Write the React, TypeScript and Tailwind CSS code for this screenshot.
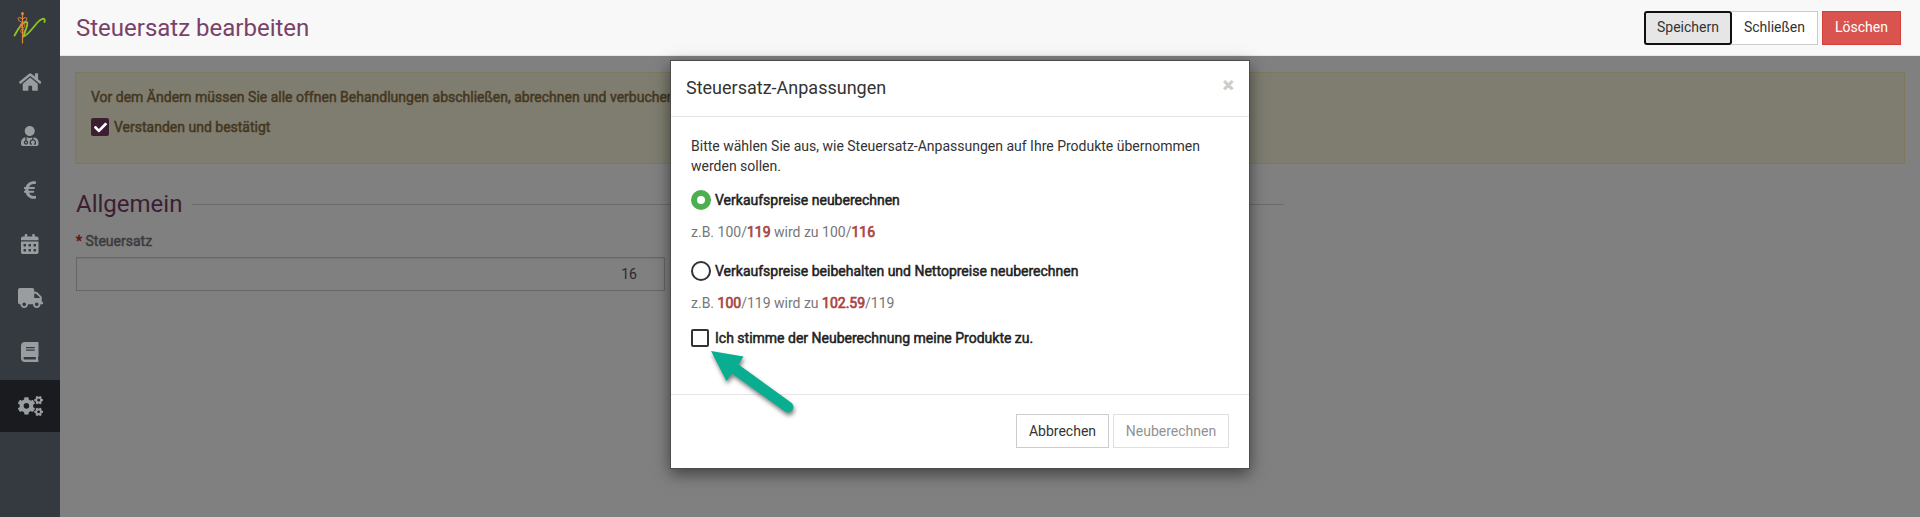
import type { ReactNode } from "react";
import { FaHome, FaUserMd, FaEuroSign, FaCalendarAlt, FaTruck, FaBook, FaCogs, FaCheck } from "react-icons/fa";

const navItems = [
  { label: "Start", Icon: FaHome, size: "w-[22.5px]", active: false },
  { label: "Kunden", Icon: FaUserMd, size: "w-[17.5px]", active: false },
  { label: "Finanzen", Icon: FaEuroSign, size: "w-[12.5px]", active: false },
  { label: "Kalender", Icon: FaCalendarAlt, size: "w-[17.5px]", active: false },
  { label: "Lieferung", Icon: FaTruck, size: "w-[25px]", active: false },
  { label: "Katalog", Icon: FaBook, size: "w-[17.5px]", active: false },
  { label: "Einstellungen", Icon: FaCogs, size: "w-[25px]", active: true },
];

function Logo() {
  return (
    <svg width="34" height="34" viewBox="0 0 34 34" fill="none" className="mt-[11px] ml-[13px]">
      <path d="M1.500 24.500C5 18 9 11.500 13 11C16.500 10.500 12 20 10.500 25.500C14 25 21 15.500 24 12C27.500 8 33 5.500 31.500 11" stroke="#8cc21f" strokeWidth="1.900" strokeLinecap="round" />
      <path d="M9.500 2V32.500" stroke="#e0843f" strokeWidth="1.200" />
      <circle cx="9.500" cy="2.500" r="1.500" fill="#e0843f" />
      <path d="M9.500 8C4 4 4 9.500 8 11C13 13 12.500 16 9.500 17.500C7 19 7.500 21.500 9.500 22.500C11.500 24 11 25 9.500 26M9.500 8C15 4 15 9.500 11 11C6 13 6.500 16 9.500 17.500C12 19 11.500 21.500 9.500 22.500" stroke="#e0843f" strokeWidth="1" />
    </svg>
  );
}

function Sidebar() {
  return (
    <nav className="flex w-[60px] shrink-0 flex-col bg-[#343a40]">
      <div className="h-14">
        <Logo />
      </div>
      <div className="flex flex-col gap-[2px]">
        {navItems.map(({ label, Icon, size, active }) => (
          <div key={label} className={`flex h-[52px] items-center justify-center text-[#9a9da0] ${active ? "bg-[#191b1e]" : ""}`}>
            <Icon className={`h-5 shrink-0 ${size}`} />
          </div>
        ))}
      </div>
    </nav>
  );
}

function Header() {
  return (
    <header className="flex h-14 shrink-0 items-center justify-between border-b border-[#e7e7e7] bg-[#f8f8f8] pr-[19px] pl-4">
      <h1 className="text-[24px] leading-none text-[#7a4068]">Steuersatz bearbeiten</h1>
      <div className="flex">
        <button className="h-[34px] w-[88px] rounded-[3px] border-2 border-[#101010] bg-[#e6e6e6] text-[#333]">Speichern</button>
        <button className="h-[34px] w-[86px] border border-l-0 border-[#ccc] bg-white text-[#333]">Schließen</button>
        <button className="ml-1 h-[34px] w-[79px] border border-[#d43f3a] bg-[#d9534f] text-white">Löschen</button>
      </div>
    </header>
  );
}

function Option({ control, children }: { control: ReactNode; children: ReactNode }) {
  return (
    <div className="flex h-5 items-center">
      {control}
      <span className="text-[#222] [-webkit-text-stroke:0.5px]">{children}</span>
    </div>
  );
}

function Changed({ children }: { children: ReactNode }) {
  return <b className="font-normal text-[#a94442] [-webkit-text-stroke:0.7px]">{children}</b>;
}

function Dialog() {
  return (
    <section className="absolute top-[60px] left-[670px] h-[409px] w-[580px] border border-[#4c4c4c] bg-white bg-clip-padding text-[#333] shadow-[0_5px_15px_rgba(0,0,0,0.5)]">
      <div className="flex h-14 items-start justify-between border-b border-[#e5e5e5] pr-[15px] pl-[15px]">
        <h2 className="mt-[15px] text-[18px] leading-6">Steuersatz-Anpassungen</h2>
        <span className="mt-[14px] text-[21px] leading-[21px] font-bold text-[#ccc] [-webkit-text-stroke:0.5px]">×</span>
      </div>
      <div className="h-[278px] border-b border-[#e5e5e5] pt-[19px] pl-5">
        <p className="w-[530px] leading-5">Bitte wählen Sie aus, wie Steuersatz-Anpassungen auf Ihre Produkte übernommen werden sollen.</p>
        <div className="mt-[14px]">
          <Option control={<span className="mr-1 size-5 rounded-full border-[6px] border-[#4caf50] bg-white" />}>Verkaufspreise neuberechnen</Option>
        </div>
        <p className="mt-3 leading-5 text-[#777]">
          z.B. 100/<Changed>119</Changed> wird zu 100/<Changed>116</Changed>
        </p>
        <div className="mt-[19px]">
          <Option control={<span className="mr-1 size-5 rounded-full border-2 border-[#333] bg-white" />}>Verkaufspreise beibehalten und Nettopreise neuberechnen</Option>
        </div>
        <p className="mt-3 leading-5 text-[#777]">
          z.B. <Changed>100</Changed>/119 wird zu <Changed>102.59</Changed>/119
        </p>
        <div className="mt-[15px]">
          <Option control={<span className="mr-1.5 size-[18px] rounded-[2px] border-2 border-[#333] bg-white" />}>Ich stimme der Neuberechnung meine Produkte zu.</Option>
        </div>
      </div>
      <div className="flex justify-end gap-1 pt-[19px] pr-5">
        <button className="h-[34px] w-[93px] border border-[#ccc] text-[#333]">Abbrechen</button>
        <button className="h-[34px] w-[116px] border border-[#dfdfdf] text-[#929292]">Neuberechnen</button>
      </div>
      <svg className="absolute top-[285px] left-[36px] drop-shadow-[1px_3px_2px_rgba(0,0,0,0.5)]" width="90" height="70" viewBox="0 0 90 70">
        <path d="M4 5.500L36.500 11L31.500 19L84 57A5.200 5.200 0 0 1 78 66L25 28L19.500 35.500Z" fill="#08ae8f" transform="translate(0 -0.500)" />
      </svg>
    </section>
  );
}

export default function App() {
  return (
    <div className="relative flex h-[517px] w-[1920px] overflow-hidden font-[Roboto,sans-serif] text-[14px]">
      <Sidebar />
      <div className="flex flex-1 flex-col">
        <Header />
        <main className="flex-1 bg-[#808080] px-[15px] pt-4">
          <div className="h-[92px] border border-[#7d775e] bg-[#7e7d70] pt-[14px] pl-[15px] text-[#453720] [-webkit-text-stroke:0.5px]">
            <p className="leading-5">Vor dem Ändern müssen Sie alle offnen Behandlungen abschließen, abrechnen und verbuchen.</p>
            <div className="mt-[10px] flex h-5 items-center gap-[5px]">
              <span className="flex size-[18px] items-center justify-center rounded-[2px] bg-[#3c1e32] text-white">
                <FaCheck size={13} />
              </span>
              <span>Verstanden und bestätigt</span>
            </div>
          </div>
          <div className="mt-[26px] flex w-[1209px] items-center gap-[10px]">
            <h2 className="pl-px text-[24px] leading-[28px] text-[#3c1e32]">Allgemein</h2>
            <span className="h-px flex-1 bg-[#6b6b6b]" />
          </div>
          <p className="mt-[13px] pl-px leading-5 text-[#3c3c3c] [-webkit-text-stroke:0.5px]">
            <span className="text-[#661414]">*</span> Steuersatz
          </p>
          <div className="mt-[6px] ml-px flex h-[34px] w-[589px] items-center justify-end border border-[#666] pr-[27px] text-[#2a2a2a] shadow-[inset_0_1px_1px_rgba(0,0,0,0.075)]">16</div>
        </main>
      </div>
      <Dialog />
    </div>
  );
}
